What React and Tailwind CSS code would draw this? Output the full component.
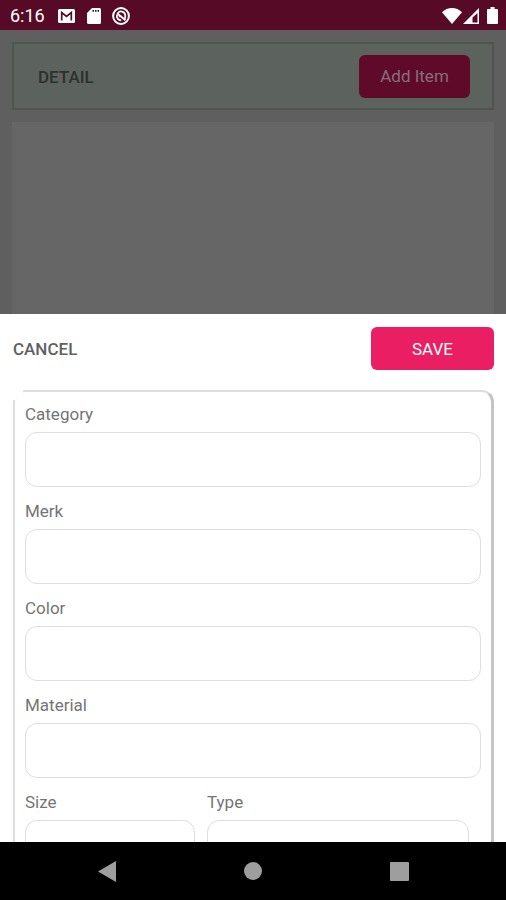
function StatusBar() {
  return (
    <header className="flex h-[30px] shrink-0 items-center justify-between bg-[#560a25] pl-[10px] pr-2 pt-px text-white">
      <div className="flex items-center">
        <span className="text-lg leading-6">6:16</span>
        <svg className="ml-[13px] h-[14px] w-[17px]" viewBox="0 0 17 14" fill="none">
          <rect width="17" height="14" rx="1.500" fill="currentColor" />
          <path d="M3.700 11.500V3.500l4.800 4 4.800-4v8" stroke="#560a25" strokeWidth="1.700" />
        </svg>
        <svg className="ml-3 h-4 w-[14px]" viewBox="0 0 14 16">
          <path
            fill="currentColor"
            fillRule="evenodd"
            d="M5 0h7.500A1.500 1.500 0 0 1 14 1.500v13a1.500 1.500 0 0 1-1.500 1.500h-11A1.500 1.500 0 0 1 0 14.500V5zM5.500 2v1.800h1.500V2zM8 2v1.800h1.500V2zM10.500 2v1.800H12V2z"
          />
        </svg>
        <svg className="ml-[11px] h-[18px] w-[18px]" viewBox="0 0 18 18" fill="none" stroke="currentColor">
          <circle cx="9" cy="9" r="7.900" strokeWidth="2" />
          <path d="M5.800 6A4.300 4.300 0 0 1 13.300 9.200c0 1.200-.5 2.200-1.200 2.900M5 7.800c-.8 3 1.200 5.400 4.200 5.500" strokeWidth="1.700" />
          <path d="M5 6.200l8.500 7M6.800 9.200h2.700" strokeWidth="1.900" />
        </svg>
      </div>
      <div className="flex items-center">
        <svg className="h-4 w-5" viewBox="0 0 20 16" fill="currentColor">
          <path d="M10 16L0 4.200C2.800 1.500 6.200 0 10 0s7.200 1.500 10 4.200z" />
        </svg>
        <svg className="ml-px h-4 w-4" viewBox="0 0 16 16">
          <path fill="currentColor" fillRule="evenodd" d="M16 0v16H0zM14.500 5L9.500 9.500v5h5z" />
        </svg>
        <svg className="ml-2 h-[17px] w-[11px]" viewBox="0 0 11 17" fill="currentColor">
          <path d="M3.500 0h4v2H10a1 1 0 0 1 1 1v13a1 1 0 0 1-1 1H1a1 1 0 0 1-1-1V3a1 1 0 0 1 1-1h2.500z" />
        </svg>
      </div>
    </header>
  );
}

function Field({ id, label }) {
  return (
    <div>
      <label htmlFor={id} className="block h-[30px] text-[17px] leading-6">
        {label}
      </label>
      <input
        id={id}
        type="text"
        className="block h-[55px] w-full rounded-xl border border-[#dedede] bg-white px-3 text-base outline-none"
      />
    </div>
  );
}

function ItemSheet() {
  return (
    <section className="flex shrink-0 basis-[65%] flex-col overflow-hidden bg-white pl-[13px] pr-3 pt-[13px] text-[#757575]">
      <div className="flex items-center justify-between">
        <button type="button" className="text-[17px] font-medium leading-6 text-[#616161]">
          CANCEL
        </button>
        <button type="button" className="h-[43px] w-[123px] rounded-md bg-[#e91e63] pt-0.5 text-[17px] text-white">
          SAVE
        </button>
      </div>

      {/* The card outline is open at its top left corner */}
      <form className="relative mt-5 flex flex-col gap-3 rounded-xl border-2 border-b-0 border-l-[#dedede] border-r-[3px] border-r-[#c4c4c4] border-t-[#dedede] px-[10px] pt-[10px] before:absolute before:-left-0.5 before:-top-0.5 before:size-2.5 before:bg-white">
        <Field id="category" label="Category" />
        <Field id="merk" label="Merk" />
        <Field id="color" label="Color" />
        <Field id="material" label="Material" />
        <div className="grid grid-cols-[170fr_262fr] gap-3 pr-3">
          <Field id="size" label="Size" />
          <Field id="type" label="Type" />
        </div>
      </form>
    </section>
  );
}

function NavBar() {
  return (
    <nav className="flex h-[58px] shrink-0 items-center justify-center gap-32 bg-black text-[#9e9e9e]">
      <button type="button" aria-label="Back">
        <svg className="h-[21px] w-[18px]" viewBox="0 0 18 21" fill="currentColor">
          <path d="M18 0v21L0 10.500z" />
        </svg>
      </button>
      <button type="button" aria-label="Home">
        <svg className="h-[18px] w-[18px]" viewBox="0 0 18 18" fill="currentColor">
          <circle cx="9" cy="9" r="9" />
        </svg>
      </button>
      <button type="button" aria-label="Recent apps">
        <svg className="h-[19px] w-[19px]" viewBox="0 0 19 19" fill="currentColor">
          <rect width="19" height="19" rx="1" />
        </svg>
      </button>
    </nav>
  );
}

export default function App() {
  return (
    <div className="flex h-screen flex-col overflow-hidden bg-[#5f5f5f] font-[Roboto,sans-serif]">
      <StatusBar />
      <main className="flex min-h-0 flex-1 flex-col">
        {/* Dimmed page behind the sheet */}
        <div className="flex min-h-0 flex-1 flex-col gap-3 px-3 pt-3">
          <div className="flex h-[68px] shrink-0 items-center justify-between border-2 border-[#505450] bg-[#5c625d] pl-6 pr-[22px]">
            <h1 className="pt-0.5 text-[17px] font-medium leading-6 text-[#2d302e]">DETAIL</h1>
            <button type="button" className="h-[43px] w-[111px] rounded-md bg-[#5f0a28] pt-0.5 text-[17px] text-[#85707a]">
              Add Item
            </button>
          </div>
          <div className="flex-1 bg-[#666666]" />
        </div>
        <ItemSheet />
      </main>
      <NavBar />
    </div>
  );
}
